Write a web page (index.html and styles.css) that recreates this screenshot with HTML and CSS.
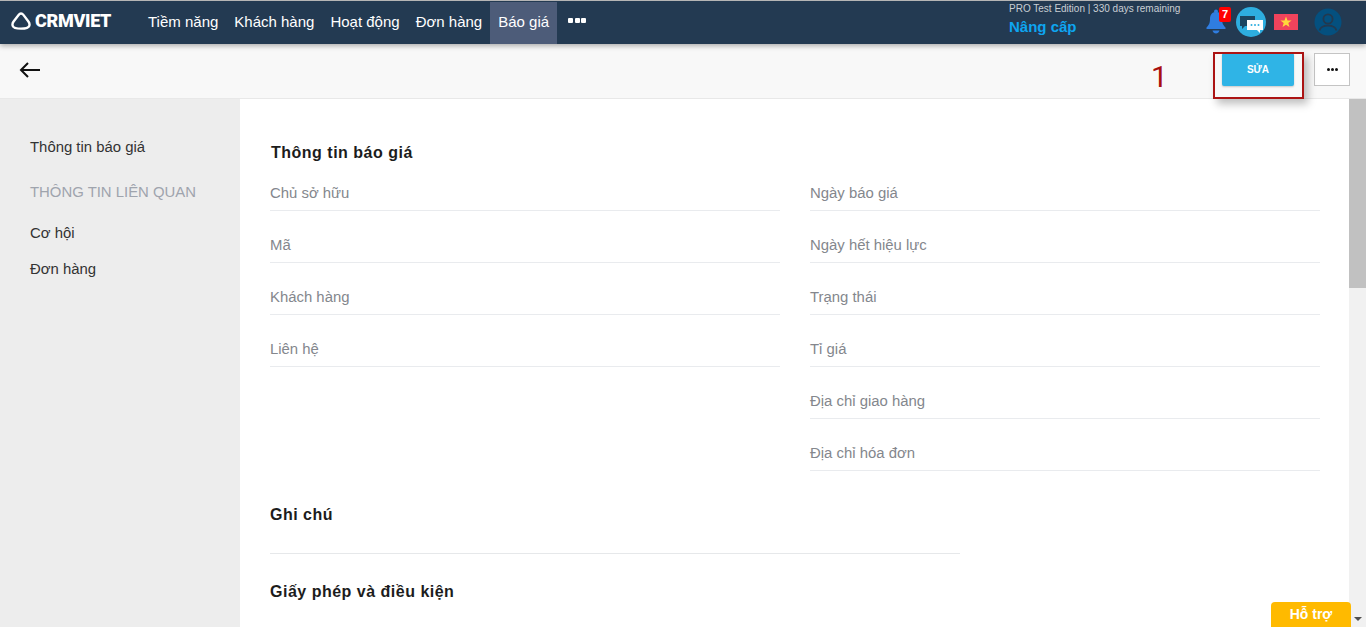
FILE: index.html
```html
<!DOCTYPE html>
<html lang="vi">
<head>
<meta charset="utf-8">
<title>Báo giá</title>
<link rel="stylesheet" href="styles.css">
</head>
<body>
<header class="navbar">
  <div class="logo">
    <svg class="logo-mark" width="20" height="18" viewBox="0 0 20 18"><path d="M10 1.5 C9 1.5 8.3 2 7.6 2.9 L2.6 9.5 C1.5 11 1.2 12.4 1.7 13.8 C2.4 15.8 4.6 16.6 10 16.6 C15.4 16.6 17.6 15.8 18.3 13.8 C18.8 12.4 18.5 11 17.4 9.5 L12.4 2.9 C11.7 2 11 1.5 10 1.5 Z" fill="none" stroke="#fff" stroke-width="2.4"/></svg>
    <span class="logo-text">CRMVIET</span>
  </div>
  <nav class="menu">
    <a class="menu-item">Tiềm năng</a>
    <a class="menu-item">Khách hàng</a>
    <a class="menu-item">Hoạt động</a>
    <a class="menu-item">Đơn hàng</a>
    <a class="menu-item active">Báo giá</a>
    <a class="menu-more"><i></i><i></i><i></i></a>
  </nav>
  <div class="edition">
    <div class="edition-line">PRO Test Edition | 330 days remaining</div>
    <div class="upgrade">Nâng cấp</div>
  </div>
  <div class="nav-icons">
    <div class="bell">
      <svg width="22" height="28" viewBox="0 0 22 28"><circle cx="10" cy="3.5" r="2" fill="#2f7de1"/><path d="M10 4 C5.5 4 4 7.5 4 11 C4 15.5 2.5 17.5 0.5 19.5 L0.5 21 L19.5 21 L19.5 19.5 C17.5 17.5 16 15.5 16 11 C16 7.5 14.5 4 10 4 Z" fill="#2f7de1"/><path d="M6.5 22.5 H13.5 C13 24.6 11.6 25.5 10 25.5 C8.4 25.5 7 24.6 6.5 22.5 Z" fill="#2f7de1"/></svg>
      <span class="badge">7</span>
    </div>
    <div class="chat">
      <svg width="30" height="30" viewBox="0 0 30 30"><circle cx="15" cy="15" r="15" fill="#2eaee0"/><path d="M4 9 H19 V19 H9 L6 22 V19 H4 Z" fill="#1c4560"/><path d="M11 13 H27 V23 H24 V26 L21 23 H11 Z" fill="#fff"/><circle cx="15.5" cy="18" r="1" fill="#2eaee0"/><circle cx="19" cy="18" r="1" fill="#2eaee0"/><circle cx="22.5" cy="18" r="1" fill="#2eaee0"/></svg>
    </div>
    <div class="flag">
      <svg width="24" height="16" viewBox="0 0 24 16"><rect width="24" height="16" fill="#f0435c"/><polygon points="12,2.6 13.5,6.5 17.6,6.6 14.3,9.1 15.5,13 12,10.7 8.5,13 9.7,9.1 6.4,6.6 10.5,6.5" fill="#ffd93b"/></svg>
    </div>
    <div class="avatar">
      <svg width="28" height="28" viewBox="0 0 28 28"><circle cx="14" cy="14" r="13.5" fill="#04507f"/><circle cx="14" cy="11" r="4.6" fill="none" stroke="#23394f" stroke-width="1.8"/><path d="M5.5 22.5 C6.5 18.5 10 17.6 14 17.6 C18 17.6 21.5 18.5 22.5 22.5" fill="none" stroke="#23394f" stroke-width="1.8"/></svg>
    </div>
  </div>
</header>

<div class="toolbar">
  <svg class="back" width="22" height="16" viewBox="0 0 22 16"><path d="M9 1 L2 8 L9 15 M2 8 H21" fill="none" stroke="#111" stroke-width="2"/></svg>
  <button class="btn-edit">SỬA</button>
  <button class="btn-more"><i></i><i></i><i></i></button>
  <span class="note-number">1</span>
  <div class="note-box"></div>
</div>

<div class="body-row">
  <aside class="side">
    <a class="side-link">Thông tin báo giá</a>
    <div class="side-title">THÔNG TIN LIÊN QUAN</div>
    <a class="side-link">Cơ hội</a>
    <a class="side-link">Đơn hàng</a>
  </aside>
  <main class="content">
    <h2 class="section-first">Thông tin báo giá</h2>
    <div class="columns">
      <div class="col">
        <div class="field">Chủ sở hữu</div>
        <div class="field">Mã</div>
        <div class="field">Khách hàng</div>
        <div class="field">Liên hệ</div>
      </div>
      <div class="col">
        <div class="field">Ngày báo giá</div>
        <div class="field">Ngày hết hiệu lực</div>
        <div class="field">Trạng thái</div>
        <div class="field">Tỉ giá</div>
        <div class="field">Địa chỉ giao hàng</div>
        <div class="field">Địa chỉ hóa đơn</div>
      </div>
    </div>
    <h2 class="section-note">Ghi chú</h2>
    <div class="note-line"></div>
    <h2 class="section-terms">Giấy phép và điều kiện</h2>
  </main>
  <div class="scrollbar">
    <div class="thumb"></div>
    <div class="arrow"></div>
  </div>
</div>
<button class="support">Hỗ trợ</button>
</body>
</html>
```
FILE: styles.css
```css
* { box-sizing: border-box; }
html, body { margin: 0; height: 627px; overflow: hidden; }
body { font-family: "Liberation Sans", Arial, sans-serif; background: #fff; color: #222; position: relative; display: flex; flex-direction: column; }

.navbar { height: 44px; flex: none; border-top: 1px solid #b5b5b5; background: #233a52; display: flex; align-items: center; color: #fff; box-shadow: 0 2px 5px rgba(0,0,0,.3); position: relative; z-index: 2; }
.logo { width: 140px; padding-left: 11px; display: flex; align-items: center; gap: 4px; flex: none; margin-top: -3px; }
.logo-mark { display: block; }
.logo-text { font-family: Roboto, sans-serif; font-weight: 900; font-size: 18px; letter-spacing: -.3px; line-height: 18px; }
.menu { display: flex; align-items: stretch; height: 42px; }
.menu-item { padding: 0 8px; font-size: 15px; line-height: 39px; color: #fff; }
.menu-item.active { background: #4d5c79; }
.menu-more { display: flex; align-items: center; gap: 1.5px; padding: 0 11px; height: 38px; }
.menu-more i { width: 5px; height: 5px; background: #fff; border-radius: 1px; }
.edition { margin-left: auto; width: 196px; flex: none; height: 42px; }
.edition-line { font-size: 10px; line-height: 13px; color: #c9ced4; }
.upgrade { font-size: 15px; font-weight: 700; color: #0ea5f0; line-height: 18px; margin-top: 3px; }
.nav-icons { display: flex; align-items: center; width: 161px; flex: none; padding-bottom: 2px; }
.bell { position: relative; width: 22px; height: 28px; margin-right: 8px; margin-left: 1px; }
.bell svg, .chat svg, .flag svg, .avatar svg { display: block; }
.badge { position: absolute; top: -1px; left: 13px; width: 12px; height: 15px; background: #f00; border-radius: 2px; font-size: 11px; font-weight: 700; line-height: 15px; text-align: center; color: #fff; }
.chat { width: 30px; height: 30px; margin-right: 8px; }
.flag { width: 24px; height: 16px; margin-right: 16px; }
.avatar { width: 28px; height: 28px; }

.toolbar { height: 55px; flex: none; background: #f8f8f8; border-bottom: 1px solid #e8e8e8; display: flex; align-items: flex-start; position: relative; }
.back { margin: 18px 0 0 19px; display: block; }
.btn-edit { margin: 9px 0 0 auto; width: 72px; height: 33px; border: 0; border-radius: 2px; background: #2fb4e6; color: #fff; font: 700 10px "Liberation Sans", sans-serif; padding: 0; box-shadow: 0 1px 2px rgba(0,0,0,.2); }
.btn-more { margin: 9px 16px 0 20px; width: 36px; height: 33px; border: 1px solid #c4c4c4; background: #fff; display: flex; align-items: center; justify-content: center; gap: 1px; padding: 0; }
.btn-more i { width: 3px; height: 3px; background: #111; border-radius: 50%; }
.note-number { position: absolute; left: 1151px; top: 16px; font-family: Roboto, sans-serif; font-size: 30px; line-height: 34px; color: #a90f0f; }
.note-box { position: absolute; left: 1213px; top: 8px; width: 91px; height: 47px; border: 2px solid #ab1313; box-shadow: 4px 5px 8px rgba(0,0,0,.25); z-index: 3; }

.body-row { flex: 1; min-height: 0; display: flex; }
.side { width: 240px; flex: none; background: #ededed; padding: 38px 0 0 30px; font-size: 14.9px; }
.side-link { display: block; line-height: 20px; color: #333; margin-bottom: 16px; }
.side-title { font-size: 14.9px; line-height: 20px; color: #9fa4ad; margin: 15px 0 21px; padding-top: 9px; }
.content { flex: 1; min-width: 0; padding: 0 29px 0 30px; overflow: hidden; }
h2 { margin: 0; font-size: 16px; font-weight: 700; color: #1c1c1c; line-height: 20px; letter-spacing: .5px; }
.section-first { margin: 44px 0 0 1px; }
.columns { display: grid; grid-template-columns: 510px 510px; column-gap: 30px; margin-top: 20px; align-items: start; }
.field { height: 28px; line-height: 20px; font-size: 14.9px; color: #84878d; border-bottom: 1px solid #e9ebee; }
.field + .field { margin-top: 24px; }
.section-note { margin-top: 34px; }
.note-line { width: 690px; height: 1px; background: #e6e8ea; margin-top: 28px; }
.section-terms { margin-top: 28px; }
.scrollbar { width: 17px; flex: none; background: #f1f1f1; position: relative; }
.thumb { height: 189px; background: #c1c1c1; }
.arrow { position: absolute; bottom: 6px; left: 5px; border-left: 4px solid transparent; border-right: 4px solid transparent; border-top: 4px solid #505050; }
.support { position: absolute; left: 1271px; top: 602px; width: 80px; height: 25px; border: 0; border-radius: 4px 4px 0 0; background: #ffba00; color: #fff; font: 700 14px/25px "Liberation Sans", sans-serif; padding: 0; z-index: 4; }
```
